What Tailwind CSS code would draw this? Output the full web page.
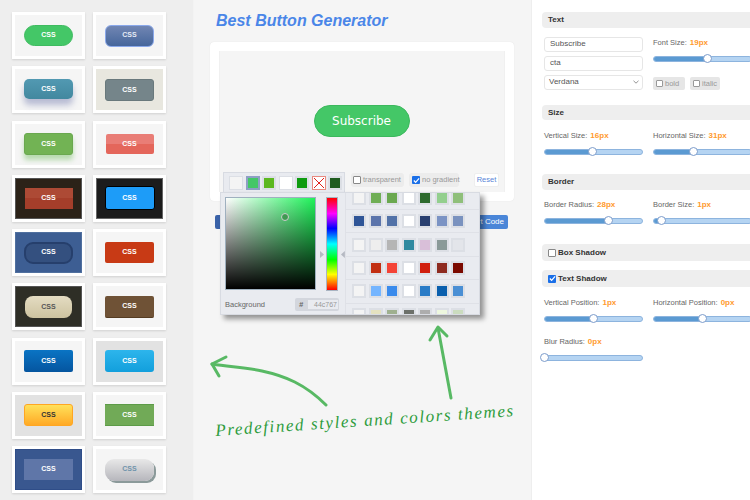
<!DOCTYPE html>
<html>
<head>
<meta charset="utf-8">
<script src="https://cdn.jsdelivr.net/npm/@tailwindcss/browser@4"></script>
</head>
<body class="font-['Liberation_Sans',sans-serif]">
<div class="relative flex w-[750px] h-[500px] overflow-hidden bg-white">

  <!-- Left gallery -->
  <aside class="w-[194px] h-full shrink-0 bg-[#eeeeee] border-r border-[#f3f3f3] pt-[12px] pl-[12px]">
    <div class="grid grid-cols-[73px_73px] auto-rows-[47px] gap-x-[8px] gap-y-[7.25px] font-['Liberation_Sans',sans-serif] text-[7px] font-bold text-white">
      <div class="bg-white p-[3px] shadow-[0_1px_2px_rgba(0,0,0,0.12)]"><div class="h-full bg-[#f5f5f5] flex items-center justify-center"><div class="w-[49px] h-[21px] flex items-center justify-center rounded-full bg-[#44c767] border border-[#3fbb60]">CSS</div></div></div>
      <div class="bg-white p-[3px] shadow-[0_1px_2px_rgba(0,0,0,0.12)]"><div class="h-full bg-[#f5f5f5] flex items-center justify-center"><div class="w-[49px] h-[22px] flex items-center justify-center rounded-[6px] bg-[linear-gradient(#7186b3,#46669b)] border border-[#8aa8ea] text-[#e6ebf5]">CSS</div></div></div>
      <div class="bg-white p-[3px] shadow-[0_1px_2px_rgba(0,0,0,0.12)]"><div class="h-full bg-[#f5f5f5] flex items-center justify-center"><div class="w-[49px] h-[20px] -mt-[2px] flex items-center justify-center rounded-[5px] bg-[linear-gradient(#5299b2,#42889f)] shadow-[0_6px_6px_rgba(70,80,150,0.35)]">CSS</div></div></div>
      <div class="bg-white p-[3px] shadow-[0_1px_2px_rgba(0,0,0,0.12)]"><div class="h-full bg-[#e8e7df] flex items-center justify-center"><div class="w-[49px] h-[22px] flex items-center justify-center rounded-[3px] bg-[#75858a] border border-[#69797c]">CSS</div></div></div>
      <div class="bg-white p-[3px] shadow-[0_1px_2px_rgba(0,0,0,0.12)]"><div class="h-full bg-[#f5f5f5] flex items-center justify-center"><div class="w-[49px] h-[22px] flex items-center justify-center rounded-[3px] bg-[#72b354] border border-[#6aa84f] shadow-[0_5px_5px_rgba(90,180,70,0.4)]">CSS</div></div></div>
      <div class="bg-white p-[3px] shadow-[0_1px_2px_rgba(0,0,0,0.12)]"><div class="h-full bg-[#f5f5f5] flex items-center justify-center"><div class="w-[48px] h-[20px] flex items-center justify-center rounded-[2px] bg-[linear-gradient(#e97d76_50%,#e4665b_50%)]">CSS</div></div></div>
      <div class="bg-white p-[3px] shadow-[0_1px_2px_rgba(0,0,0,0.12)]"><div class="h-full bg-[#2b2218] border border-[#555555] flex items-center justify-center"><div class="w-[48px] h-[21px] flex items-center justify-center bg-[linear-gradient(#ad4a35_50%,#a53e2a_50%)]">CSS</div></div></div>
      <div class="bg-white p-[3px] shadow-[0_1px_2px_rgba(0,0,0,0.12)]"><div class="h-full bg-[#1c1c1c] border border-[#666666] flex items-center justify-center"><div class="w-[50px] h-[24px] flex items-center justify-center rounded-[3px] bg-[#1d9cf8] border border-black">CSS</div></div></div>
      <div class="bg-white p-[3px] shadow-[0_1px_2px_rgba(0,0,0,0.12)]"><div class="h-full bg-[#3d5e93] border border-[#50709f] flex items-center justify-center"><div class="w-[49px] h-[22px] flex items-center justify-center rounded-[9px] bg-[#34507f] border-2 border-[#263f6c]">CSS</div></div></div>
      <div class="bg-white p-[3px] shadow-[0_1px_2px_rgba(0,0,0,0.12)]"><div class="h-full bg-[#f5f5f5] flex items-center justify-center"><div class="w-[49px] h-[21px] flex items-center justify-center rounded-[2px] bg-[#c83a15]">CSS</div></div></div>
      <div class="bg-white p-[3px] shadow-[0_1px_2px_rgba(0,0,0,0.12)]"><div class="h-full bg-[#2e2e26] border border-[#555555] flex items-center justify-center"><div class="w-[47px] h-[22px] flex items-center justify-center rounded-[8px] bg-[linear-gradient(#e4dcc2,#cdc3a0)] text-[#555555]">CSS</div></div></div>
      <div class="bg-white p-[3px] shadow-[0_1px_2px_rgba(0,0,0,0.12)]"><div class="h-full bg-[#f5f5f5] flex items-center justify-center"><div class="w-[49px] h-[22px] flex items-center justify-center rounded-[2px] bg-[#6f5236] border-b border-[#553c22]">CSS</div></div></div>
      <div class="bg-white p-[3px] shadow-[0_1px_2px_rgba(0,0,0,0.12)]"><div class="h-full bg-[#f5f5f5] flex items-center justify-center"><div class="w-[49px] h-[22px] flex items-center justify-center rounded-[2px] bg-[linear-gradient(#0a74c4,#05559f)]">CSS</div></div></div>
      <div class="bg-white p-[3px] shadow-[0_1px_2px_rgba(0,0,0,0.12)]"><div class="h-full bg-[#e2e2e2] flex items-center justify-center"><div class="w-[49px] h-[22px] flex items-center justify-center rounded-[3px] bg-[linear-gradient(#2db5ec,#129fdc)]">CSS</div></div></div>
      <div class="bg-white p-[3px] shadow-[0_1px_2px_rgba(0,0,0,0.12)]"><div class="h-full bg-[#e2e2e2] flex items-center justify-center"><div class="w-[49px] h-[22px] flex items-center justify-center rounded-[3px] bg-[linear-gradient(#ffe15a,#ffa925)] border border-[#ffa622] text-[#333333]">CSS</div></div></div>
      <div class="bg-white p-[3px] shadow-[0_1px_2px_rgba(0,0,0,0.12)]"><div class="h-full bg-[#f5f5f5] flex items-center justify-center"><div class="w-[49px] h-[22px] flex items-center justify-center bg-[#71aa57] border-y border-[#5d9b48]">CSS</div></div></div>
      <div class="bg-white p-[3px] shadow-[0_1px_2px_rgba(0,0,0,0.12)]"><div class="h-full bg-[#39578f] border border-[#2f4d88] flex items-center justify-center"><div class="w-[49px] h-[21px] flex items-center justify-center bg-[#5f76a8]">CSS</div></div></div>
      <div class="bg-white p-[3px] shadow-[0_1px_2px_rgba(0,0,0,0.12)]"><div class="h-full bg-[#f5f5f5] flex items-center justify-center"><div class="w-[49px] h-[22px] flex items-center justify-center rounded-[9px] bg-[linear-gradient(#e8e8e8,#b6b6bc)] shadow-[2px_2px_0_#8b9a9a] text-[#6f93ab]">CSS</div></div></div>
    </div>
  </aside>

  <!-- Centre -->
  <main class="w-[337px] h-full shrink-0 bg-[#f5f5f5] pl-[16px]">
    <h1 class="h-[42px] pl-[6px] pt-[11px] text-[16px] leading-[19px] font-bold italic text-[#4a86e8]">Best Button Generator</h1>
    <div class="w-[304px] h-[159px] bg-white rounded-[4px] p-[9px] shadow-[0_0_1px_rgba(0,0,0,0.12)]">
      <div class="h-[141px] bg-[#f5f5f5] border-x border-[#f0f0f0] pt-[54px] flex flex-col">
        <button class="self-center w-[96px] h-[32px] -ml-[1px] shrink-0 rounded-[16px] bg-[#44c767] border border-[#3cb85d] text-white text-[12px] font-['DejaVu_Sans',sans-serif]">Subscribe</button>
        <div class="mt-[35px] pl-[131px] flex items-center text-[7.5px] text-[#999999] h-[16px] whitespace-nowrap">
          <span class="w-[53px] h-[14px] shrink-0 rounded-[3px] bg-[#ececec] flex items-center gap-[2px] pl-[2px]"><span class="w-[8px] h-[8px] shrink-0 bg-white border border-[#888888] rounded-[1px]"></span>transparent</span>
          <span class="ml-[5px] w-[50px] h-[14px] shrink-0 rounded-[3px] bg-[#ececec] flex items-center gap-[2px] pl-[3px]"><span class="w-[8px] h-[8px] shrink-0 bg-[#1a6fe8] rounded-[1px] text-white flex items-center justify-center"><svg width="7" height="7" viewBox="0 0 8 8"><path d="M1 4l2 2.2L7 1.5" fill="none" stroke="#fff" stroke-width="1.4"/></svg></span>no gradient</span>
          <span class="ml-[15px] w-[25px] h-[14px] shrink-0 rounded-[2px] bg-white border border-[#eeeeee] flex items-center justify-center text-[#5a86d8]">Reset</span>
        </div>
      </div>
    </div>
    <div class="w-[293px] ml-[5px] mt-[14px] flex justify-between text-[8px] text-white">
      <span class="w-[70px] h-[14px] rounded-[2px] bg-[#3a62a8]"></span>
      <span class="w-[68px] h-[14px] rounded-[2px] bg-[#4a86d8] flex items-center justify-end pr-[4px]">Export Code</span>
    </div>
  </main>

  <!-- Right settings -->
  <section class="w-[219px] h-full shrink-0 bg-white overflow-hidden pt-[12px] pl-[10px] text-[7.5px] text-[#666666] border-l border-[#eeeeee]">
    <div class="w-[230px]">
      <div class="h-[16px] w-[220px] pl-[6px] flex items-center rounded-l-[4px] bg-[#eeeeee] text-[8px] font-bold text-[#333333]">Text</div>
      <div class="mt-[9px] ml-[2px] grid grid-cols-[99px_99px] gap-x-[10px]">
        <div class="flex flex-col gap-[4.5px] text-[8px]">
          <div class="h-[14.5px] border border-[#e6e6e6] rounded-[3px] pl-[5px] flex items-center text-[#555555]">Subscribe</div>
          <div class="h-[14.5px] border border-[#e6e6e6] rounded-[3px] pl-[5px] flex items-center text-[#555555]">cta</div>
          <div class="h-[14.5px] border border-[#e6e6e6] rounded-[3px] pl-[4px] pr-[3px] flex items-center justify-between text-[#555555]">Verdana<svg width="6" height="4" viewBox="0 0 6 4"><path d="M0.5 0.8L3 3.2 5.5 0.8" fill="none" stroke="#777777" stroke-width="0.8"/></svg></div>
        </div>
        <div>
          <div class="h-[10px] mt-[1px] flex items-center gap-[3px]">Font Size: <b class="text-[8px] text-[#ff9a2e]">19px</b></div>
          <div class="relative mt-[8px] h-[6px] rounded-full bg-[#b5d4f2] border border-[#8db4de]"><div class="w-[54px] h-full rounded-l-full bg-[#5b9ad2]"></div><div class="absolute left-[49px] top-[-3px] w-[9px] h-[9px] rounded-full bg-white border border-[#7c9ccb]"></div></div>
          <div class="mt-[15px] flex text-[#999999]">
            <span class="w-[32px] h-[13px] rounded-[2px] bg-[#e6e6e6] flex items-center gap-[2px] pl-[3px]"><span class="w-[7px] h-[7px] bg-white border border-[#999999] rounded-[1px]"></span>bold</span>
            <span class="ml-[5px] w-[30px] h-[13px] rounded-[2px] bg-[#e6e6e6] flex items-center gap-[2px] pl-[3px]"><span class="w-[7px] h-[7px] bg-white border border-[#999999] rounded-[1px]"></span>italic</span>
          </div>
        </div>
      </div>

      <div class="mt-[15px] h-[15px] w-[220px] pl-[6px] flex items-center rounded-l-[4px] bg-[#eeeeee] text-[8px] font-bold text-[#333333]">Size</div>
      <div class="mt-[11px] ml-[2px] grid grid-cols-[99px_99px] gap-x-[10px]">
        <div>
          <div class="h-[10px] flex items-center gap-[3px]">Vertical Size: <b class="text-[8px] text-[#ff9a2e]">16px</b></div>
          <div class="relative mt-[8px] h-[6px] rounded-full bg-[#b5d4f2] border border-[#8db4de]"><div class="w-[48px] h-full rounded-l-full bg-[#5b9ad2]"></div><div class="absolute left-[43px] top-[-3px] w-[9px] h-[9px] rounded-full bg-white border border-[#7c9ccb]"></div></div>
        </div>
        <div>
          <div class="h-[10px] flex items-center gap-[3px]">Horizontal Size: <b class="text-[8px] text-[#ff9a2e]">31px</b></div>
          <div class="relative mt-[8px] h-[6px] rounded-full bg-[#b5d4f2] border border-[#8db4de]"><div class="w-[39px] h-full rounded-l-full bg-[#5b9ad2]"></div><div class="absolute left-[35px] top-[-3px] w-[9px] h-[9px] rounded-full bg-white border border-[#7c9ccb]"></div></div>
        </div>
      </div>

      <div class="mt-[19px] h-[16px] w-[220px] pl-[6px] flex items-center rounded-l-[4px] bg-[#eeeeee] text-[8px] font-bold text-[#333333]">Border</div>
      <div class="mt-[10px] ml-[2px] grid grid-cols-[99px_99px] gap-x-[10px]">
        <div>
          <div class="h-[10px] flex items-center gap-[3px]">Border Radius: <b class="text-[8px] text-[#ff9a2e]">28px</b></div>
          <div class="relative mt-[8px] h-[6px] rounded-full bg-[#b5d4f2] border border-[#8db4de]"><div class="w-[64px] h-full rounded-l-full bg-[#5b9ad2]"></div><div class="absolute left-[59px] top-[-3px] w-[9px] h-[9px] rounded-full bg-white border border-[#7c9ccb]"></div></div>
        </div>
        <div>
          <div class="h-[10px] flex items-center gap-[3px]">Border Size: <b class="text-[8px] text-[#ff9a2e]">1px</b></div>
          <div class="relative mt-[8px] h-[6px] rounded-full bg-[#b5d4f2] border border-[#8db4de]"><div class="w-[8px] h-full rounded-l-full bg-[#5b9ad2]"></div><div class="absolute left-[3px] top-[-3px] w-[9px] h-[9px] rounded-full bg-white border border-[#7c9ccb]"></div></div>
        </div>
      </div>

      <div class="mt-[20px] h-[17px] w-[220px] pl-[6px] flex items-center gap-[2px] rounded-l-[4px] bg-[#eeeeee] text-[8px] font-bold text-[#333333]"><span class="w-[8px] h-[8px] bg-white border border-[#888888] rounded-[1px]"></span>Box Shadow</div>
      <div class="mt-[9px] h-[17px] w-[220px] pl-[6px] flex items-center gap-[2px] rounded-l-[4px] bg-[#eeeeee] text-[8px] font-bold text-[#333333]"><span class="w-[8px] h-[8px] bg-[#1a6fe8] rounded-[1px] flex items-center justify-center"><svg width="7" height="7" viewBox="0 0 8 8"><path d="M1 4l2 2.2L7 1.5" fill="none" stroke="#fff" stroke-width="1.4"/></svg></span>Text Shadow</div>
      <div class="mt-[11px] ml-[2px] grid grid-cols-[99px_99px] gap-x-[10px]">
        <div>
          <div class="h-[10px] flex items-center gap-[3px]">Vertical Position: <b class="text-[8px] text-[#ff9a2e]">1px</b></div>
          <div class="relative mt-[8px] h-[6px] rounded-full bg-[#b5d4f2] border border-[#8db4de]"><div class="w-[49px] h-full rounded-l-full bg-[#5b9ad2]"></div><div class="absolute left-[44px] top-[-3px] w-[9px] h-[9px] rounded-full bg-white border border-[#7c9ccb]"></div></div>
        </div>
        <div>
          <div class="h-[10px] flex items-center gap-[3px]">Horizontal Position: <b class="text-[8px] text-[#ff9a2e]">0px</b></div>
          <div class="relative mt-[8px] h-[6px] rounded-full bg-[#b5d4f2] border border-[#8db4de]"><div class="w-[48px] h-full rounded-l-full bg-[#5b9ad2]"></div><div class="absolute left-[44px] top-[-3px] w-[9px] h-[9px] rounded-full bg-white border border-[#7c9ccb]"></div></div>
        </div>
      </div>
      <div class="mt-[15px] ml-[2px] w-[99px]">
        <div class="h-[10px] flex items-center gap-[3px]">Blur Radius: <b class="text-[8px] text-[#ff9a2e]">0px</b></div>
        <div class="relative mt-[8px] h-[6px] rounded-full bg-[#b5d4f2] border border-[#8db4de]"><div class="absolute left-[-5px] top-[-3px] w-[9px] h-[9px] rounded-full bg-white border border-[#7c9ccb]"></div></div>
      </div>
    </div>
  </section>

  <!-- Colour picker popover -->
  <div class="absolute left-[220px] top-[172px] w-[260px]">
    <div class="ml-[3px] w-[122px] h-[20px] bg-[#e9ebf0] border border-b-0 border-[#d8dbe2] flex items-center gap-[2.5px] pl-[5px]">
      <span class="w-[14px] h-[14px] bg-[#f4f4f4] border border-[#dcdfe5]"></span>
      <span class="w-[14px] h-[14px] bg-[#44c767] border-2 border-[#8e9fc4]"></span>
      <span class="w-[14px] h-[14px] bg-[#5cb820] border-2 border-[#dcdfe5]"></span>
      <span class="w-[14px] h-[14px] bg-white border border-[#dcdfe5]"></span>
      <span class="w-[14px] h-[14px] bg-[#0e9b10] border-2 border-[#dcdfe5]"></span>
      <span class="w-[14px] h-[14px] bg-white border border-[#e88a80] flex items-center justify-center"><svg width="12" height="12" viewBox="0 0 12 12"><path d="M1 1l10 10M11 1L1 11" stroke="#e0201a" stroke-width="1"/></svg></span>
      <span class="w-[14px] h-[14px] bg-[#1f5c1f] border-2 border-[#dcdfe5]"></span>
    </div>
    <div class="flex h-[123px] bg-[#e9ebf0] border border-[#d8dbe2] shadow-[4px_4px_5px_rgba(0,0,0,0.4)]">
      <div class="w-[125px] shrink-0 relative pt-[4px] pl-[4px] border-r border-[#dfe1e7]">
        <div class="flex items-start">
          <div class="relative w-[93px] h-[93px] border border-[#9fb0bf] bg-[linear-gradient(to_bottom,transparent,#000),linear-gradient(to_right,#ffffff,#1ff25a)]">
            <span class="absolute left-[55px] top-[15px] w-[8px] h-[8px] rounded-full border border-[#cccccc] bg-[#3f9a52]"></span>
          </div>
          <div class="ml-[8px] w-[3px] relative h-[93px]">
            <svg class="absolute left-[-4px] top-[54px]" width="5" height="7" viewBox="0 0 5 7"><path d="M0 0l4 3.5L0 7z" fill="#b5b9c2"/></svg>
          </div>
          <div class="w-[12px] h-[94px] border border-[#a9b4c2] bg-[linear-gradient(#ff0000,#ff00ff_17%,#0000ff_33%,#00ffff_50%,#00ff00_67%,#ffff00_83%,#ff0000)]"></div>
          <svg class="ml-[2px] mt-[54px]" width="5" height="7" viewBox="0 0 5 7"><path d="M5 0L1 3.5 5 7z" fill="#b5b9c2"/></svg>
        </div>
        <div class="mt-[7px] flex items-center justify-between pr-[6px] text-[7.5px] text-[#666666]">
          <span>Background</span>
          <span class="w-[44px] h-[13px] rounded-[2px] bg-[#d3d6dd] flex items-center pl-[4px] gap-[5px] font-bold italic">#<span class="flex-1 mr-[1px] h-[9px] bg-[#e9ebf0] text-right pr-[1px] font-normal not-italic leading-[9px] text-[#999999] text-[7px]">44c767</span></span>
        </div>
      </div>
      <div class="flex-1 overflow-hidden">
        <div class="h-[23.4px] -mt-[6.4px] flex items-center gap-[2.5px] pl-[6px] border-b border-[#dfe1e7]">
          <span class="w-[14px] h-[14px] border-2 border-[#dcdfe5] bg-[#f4f4f4]"></span><span class="w-[14px] h-[14px] border-2 border-[#dcdfe5] bg-[#6fae55]"></span><span class="w-[14px] h-[14px] border-2 border-[#dcdfe5] bg-[#6aa84f]"></span><span class="w-[14px] h-[14px] border-2 border-[#dcdfe5] bg-white"></span><span class="w-[14px] h-[14px] border-2 border-[#dcdfe5] bg-[#2d6a2d]"></span><span class="w-[14px] h-[14px] border-2 border-[#dcdfe5] bg-[#93cf8e]"></span><span class="w-[14px] h-[14px] border-2 border-[#dcdfe5] bg-[#8fbf7a]"></span>
        </div>
        <div class="h-[23.4px] flex items-center gap-[2.5px] pl-[6px] border-b border-[#dfe1e7]">
          <span class="w-[14px] h-[14px] border-2 border-[#dcdfe5] bg-[#2f5597]"></span><span class="w-[14px] h-[14px] border-2 border-[#dcdfe5] bg-[#5b74ab]"></span><span class="w-[14px] h-[14px] border-2 border-[#dcdfe5] bg-[#5272a8]"></span><span class="w-[14px] h-[14px] border-2 border-[#dcdfe5] bg-white"></span><span class="w-[14px] h-[14px] border-2 border-[#dcdfe5] bg-[#2a4070]"></span><span class="w-[14px] h-[14px] border-2 border-[#dcdfe5] bg-[#7b93c4]"></span><span class="w-[14px] h-[14px] border-2 border-[#dcdfe5] bg-[#7a92bf]"></span>
        </div>
        <div class="h-[23.4px] flex items-center gap-[2.5px] pl-[6px] border-b border-[#dfe1e7]">
          <span class="w-[14px] h-[14px] border-2 border-[#dcdfe5] bg-[#f4f4f4]"></span><span class="w-[14px] h-[14px] border-2 border-[#dcdfe5] bg-[#eeeeee]"></span><span class="w-[14px] h-[14px] border-2 border-[#dcdfe5] bg-[#b5b5b5]"></span><span class="w-[14px] h-[14px] border-2 border-[#dcdfe5] bg-[#2f8aa0]"></span><span class="w-[14px] h-[14px] border-2 border-[#dcdfe5] bg-[#d9bfd9]"></span><span class="w-[14px] h-[14px] border-2 border-[#dcdfe5] bg-[#8a9a98]"></span><span class="w-[14px] h-[14px] border-2 border-[#dcdfe5] bg-[#e3e5ea]"></span>
        </div>
        <div class="h-[23.4px] flex items-center gap-[2.5px] pl-[6px] border-b border-[#dfe1e7]">
          <span class="w-[14px] h-[14px] border-2 border-[#dcdfe5] bg-[#f4f4f4]"></span><span class="w-[14px] h-[14px] border-2 border-[#dcdfe5] bg-[#c22f12]"></span><span class="w-[14px] h-[14px] border-2 border-[#dcdfe5] bg-[#f44336]"></span><span class="w-[14px] h-[14px] border-2 border-[#dcdfe5] bg-white"></span><span class="w-[14px] h-[14px] border-2 border-[#dcdfe5] bg-[#d11f0d]"></span><span class="w-[14px] h-[14px] border-2 border-[#dcdfe5] bg-[#8e2b20]"></span><span class="w-[14px] h-[14px] border-2 border-[#dcdfe5] bg-[#7b0a00]"></span>
        </div>
        <div class="h-[23.4px] flex items-center gap-[2.5px] pl-[6px] border-b border-[#dfe1e7]">
          <span class="w-[14px] h-[14px] border-2 border-[#dcdfe5] bg-[#f4f4f4]"></span><span class="w-[14px] h-[14px] border-2 border-[#dcdfe5] bg-[#74b5ff]"></span><span class="w-[14px] h-[14px] border-2 border-[#dcdfe5] bg-[#3a8bec]"></span><span class="w-[14px] h-[14px] border-2 border-[#dcdfe5] bg-white"></span><span class="w-[14px] h-[14px] border-2 border-[#dcdfe5] bg-[#2a7cc7]"></span><span class="w-[14px] h-[14px] border-2 border-[#dcdfe5] bg-[#0a5fad]"></span><span class="w-[14px] h-[14px] border-2 border-[#dcdfe5] bg-[#4a8fd4]"></span>
        </div>
        <div class="h-[23.4px] flex items-center gap-[2.5px] pl-[6px]">
          <span class="w-[14px] h-[14px] border-2 border-[#dcdfe5] bg-[#f4f4f4]"></span><span class="w-[14px] h-[14px] border-2 border-[#dcdfe5] bg-[#e5e2c0]"></span><span class="w-[14px] h-[14px] border-2 border-[#dcdfe5] bg-[#9fb08f]"></span><span class="w-[14px] h-[14px] border-2 border-[#dcdfe5] bg-[#6c706a]"></span><span class="w-[14px] h-[14px] border-2 border-[#dcdfe5] bg-[#adadad]"></span><span class="w-[14px] h-[14px] border-2 border-[#dcdfe5] bg-[#edf7de]"></span><span class="w-[14px] h-[14px] border-2 border-[#dcdfe5] bg-[#cbdcbf]"></span>
        </div>
      </div>
    </div>
  </div>

  <!-- Annotation -->
  <svg class="absolute left-0 top-0 pointer-events-none" width="750" height="500" viewBox="0 0 750 500" fill="none" stroke="#58b964" stroke-width="3" stroke-linecap="round" stroke-linejoin="round">
    <path d="M326 405C305 384 285 376 262 371C245 367 230 367 212 364"/>
    <path d="M226 357L212 364L219 376"/>
    <path d="M451 398L438 328"/>
    <path d="M430 340L438 327L447 336"/>
  </svg>
  <div class="absolute left-[215px] top-[409px] w-[300px] flex justify-center whitespace-nowrap rotate-[-3.8deg] font-['Liberation_Serif',serif] italic text-[17px] leading-[24px] tracking-[1.6px] text-[#2d9c3c]">Predefined styles and colors themes</div>
</div>
</body>
</html>
